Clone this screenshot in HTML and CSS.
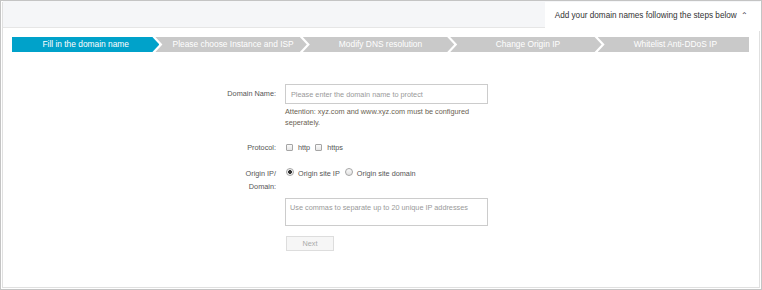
FILE: index.html
```html
<!DOCTYPE HTML>
<html>
  <head>
    <link rel="stylesheet" href="styles.css">
  </head>
  <body>
    <div class="panel">
      <div class="head">
        <div class="tab">Add your domain names following the steps below <span class="caret">&#8963;</span></div>
      </div>

      <div class="steps">
        <div class="step active">Fill in the domain name</div>
        <div class="step">Please choose Instance and ISP</div>
        <div class="step">Modify DNS resolution</div>
        <div class="step">Change Origin IP</div>
        <div class="step last">Whitelist Anti-DDoS IP</div>
      </div>

      <div class="form">
        <div class="row">
          <label class="label label_input">Domain Name:</label>
          <div class="field">
            <input class="text_in" placeholder="Please enter the domain name to protect">
            <p class="note">Attention: xyz.com and www.xyz.com must be configured seperately.</p>
          </div>
        </div>

        <div class="row row_protocol">
          <label class="label">Protocol:</label>
          <div class="field options">
            <input type="checkbox" class="check"><span class="opt">http</span>
            <input type="checkbox" class="check"><span class="opt">https</span>
          </div>
        </div>

        <div class="row row_origin">
          <label class="label">Origin IP/<br>Domain:</label>
          <div class="field options">
            <input type="radio" name="origin" class="radio" checked><span class="opt">Origin site IP</span>
            <input type="radio" name="origin" class="radio"><span class="opt">Origin site domain</span>
          </div>
        </div>

        <div class="row row_ips">
          <div class="label"></div>
          <div class="field">
            <textarea class="ips" placeholder="Use commas to separate up to 20 unique IP addresses"></textarea>
            <button class="next" disabled>Next</button>
          </div>
        </div>
      </div>
    </div>
  </body>
</html>
```

FILE: styles.css
```css
* {
  box-sizing: border-box;
}
body {
  margin: 0;
  background-color: #fff;
  font-family: "Liberation Sans", Arial, sans-serif;
}

.panel {
  width: 762px;
  height: 290px;
  border: 1px solid #c4c4c4;
  box-shadow: inset 1px 1px 0 #fff, inset -1px -1px 0 #fff, inset 2px 2px 0 #e0e0e0, inset -2px -2px 0 #e0e0e0;
}

.head {
  height: 27px;
  background-color: #f5f6f8;
  border-bottom: 1px solid #e6e6e6;
  margin: 0 1px 0 2px;
  display: flex;
  justify-content: flex-end;
}

.tab {
  background-color: #fff;
  height: 29px;
  margin-top: 1px;
  padding: 0 12px 0 10px;
  font-size: 8.2px;
  line-height: 28px;
  color: #333;
}

.caret {
  font-size: 8px;
  margin-left: 2px;
}

.steps {
  display: flex;
  margin: 9px 12px 0 11px;
  height: 15px;
}

.step {
  flex: 1;
  background-color: #c9c9c9;
  color: #fff;
  font-size: 8.4px;
  line-height: 15px;
  text-align: center;
  margin-left: -4px;
  padding-left: 4px;
  clip-path: polygon(0 0, calc(100% - 7px) 0, 100% 50%, calc(100% - 7px) 100%, 0 100%, 7px 50%);
}

.step.active {
  background-color: #00a2ca;
  margin-left: 0;
  padding-left: 0;
  clip-path: polygon(0 0, calc(100% - 7px) 0, 100% 50%, calc(100% - 7px) 100%, 0 100%);
}

.step.last {
  clip-path: polygon(0 0, 100% 0, 100% 100%, 0 100%, 7px 50%);
}

.form {
  margin-top: 32px;
  padding-left: 175px;
  font-size: 7.3px;
}

.row {
  display: flex;
}

.label {
  width: 100px;
  text-align: right;
  color: #555;
  line-height: 13px;
}

.label_input {
  line-height: 20px;
}

.field {
  margin-left: 9px;
}

.text_in {
  display: block;
  width: 203px;
  height: 20px;
  border: 1px solid #ccc;
  padding: 0 5px;
  font-family: inherit;
  font-size: 7.3px;
  color: #333;
}

.text_in::placeholder, .ips::placeholder {
  color: #999;
}

.note {
  width: 200px;
  margin: 2px 0 0 0;
  line-height: 11px;
  color: #6b5f52;
}

.row_protocol {
  margin-top: 13px;
}

.row_origin {
  margin-top: 13px;
}

.options {
  display: flex;
  align-items: flex-start;
  line-height: 13px;
}

.opt {
  color: #555;
  margin-right: 4px;
}

.check {
  appearance: none;
  width: 7px;
  height: 7px;
  margin: 3px 5px 0 1px;
  border: 1px solid #a5a5a5;
  border-radius: 1px;
  background: linear-gradient(#fafafa, #e6e6e6);
}

.radio {
  appearance: none;
  width: 8px;
  height: 8px;
  margin: 1px 4px 0 1px;
  border: 1px solid #a5a5a5;
  border-radius: 50%;
  background: linear-gradient(#fafafa, #e2e2e2);
}

.radio:checked {
  background: radial-gradient(circle, #333 0, #333 1.6px, #f2f2f2 2.2px);
}

.row_ips {
  margin-top: 5px;
}

.ips {
  display: block;
  width: 203px;
  height: 28px;
  border: 1px solid #ccc;
  padding: 4px 4px;
  resize: none;
  font-family: inherit;
  font-size: 7.3px;
}

.next {
  display: block;
  margin: 10px 0 0 1px;
  width: 48px;
  height: 15px;
  border: 1px solid #ddd;
  background-color: #f6f6f6;
  color: #aaa;
  font-family: inherit;
  font-size: 7.3px;
  padding: 0;
}
```
